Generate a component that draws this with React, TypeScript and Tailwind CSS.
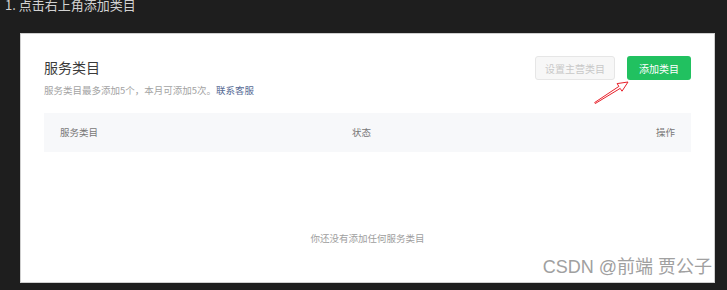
import React from 'react';

const cjk = "font-['Noto_Sans_CJK_SC','Noto_Sans',sans-serif]";

function Arrow() {
  return (
    <svg
      width="44"
      height="30"
      viewBox="0 0 44 30"
      className="absolute left-[570px] top-[44px]"
      fill="none"
    >
      <polygon
        points="4.3,25.5 29.2,10.4 31,13.2 37,4 26.1,5.6 27.9,8.4 3.7,24.5"
        stroke="#e8202a"
        strokeWidth="1"
        strokeLinejoin="miter"
        fill="#fff"
      />
    </svg>
  );
}

export default function App() {
  return (
    <div className={`relative w-[727px] h-[290px] overflow-hidden bg-[#1e1e1e] ${cjk}`}>
      <div className="h-[33px] overflow-hidden">
        <p className="-mt-[3px] pl-[5px] text-[13px] leading-[16px] text-[#d2d2d2]">1. 点击右上角添加类目</p>
      </div>

      <div className="relative ml-[20px] w-[695px] h-[250px] bg-white border border-[#cfcfcf] px-[23px] pt-[22px]">
        <div className="flex justify-between">
          <div>
            <h1 className="mt-[1px] text-[14px] leading-[20px] text-[#3a3a3a]">服务类目</h1>
            <p className="mt-[6px] text-[9.5px] leading-[14px] text-[#a3a3a3]">
              服务类目最多添加5个，本月可添加5次。<span className="text-[#576b95]">联系客服</span>
            </p>
          </div>
          <div className="flex gap-[12px]">
            <button className="w-[80px] h-[24px] rounded-[3px] border border-[#e6e6e6] bg-[#f7f7f7] text-[10px] text-[#c8c8c8]">
              设置主营类目
            </button>
            <button className="w-[64px] h-[24px] rounded-[3px] bg-[#21c160] text-[10px] text-white">
              添加类目
            </button>
          </div>
        </div>

        <div className="mt-[16px] h-[39px] flex items-center bg-[#f7f8fa] px-4 text-[9.5px] text-[#777]">
          <span className="w-[292px]">服务类目</span>
          <span className="flex-1">状态</span>
          <span>操作</span>
        </div>

        <p className="mt-[79px] text-center text-[9.5px] leading-[14px] text-[#9e9e9e]">你还没有添加任何服务类目</p>

        <Arrow />
      </div>

      <div className="absolute right-[15px] top-[255px] text-[18px] leading-[24px] text-[#a0a0a0] font-['Liberation_Sans','Noto_Sans_CJK_SC',sans-serif]">
        CSDN @前端 贾公子
      </div>
    </div>
  );
}
